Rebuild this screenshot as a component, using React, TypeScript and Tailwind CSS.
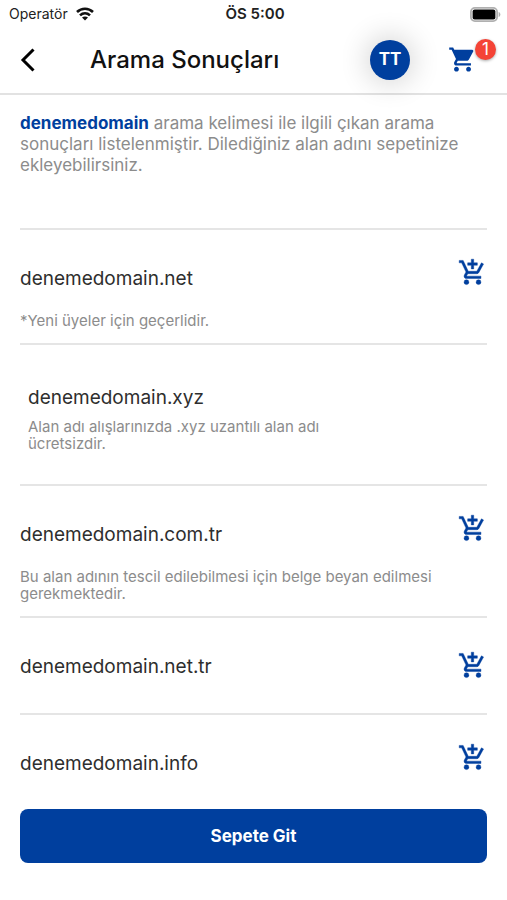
import { MdShoppingCart } from "react-icons/md";

type Domain = {
  name: string;
  note?: string;
  layout: "noted" | "promo" | "plain" | "last";
};

const domains: Domain[] = [
  { name: "denemedomain.net", note: "*Yeni üyeler için geçerlidir.", layout: "noted" },
  {
    name: "denemedomain.xyz",
    note: "Alan adı alışlarınızda .xyz uzantılı alan adı ücretsizdir.",
    layout: "promo",
  },
  {
    name: "denemedomain.com.tr",
    note: "Bu alan adının tescil edilebilmesi için belge beyan edilmesi gerekmektedir.",
    layout: "noted",
  },
  { name: "denemedomain.net.tr", layout: "plain" },
  { name: "denemedomain.info", layout: "last" },
];

function WifiIcon() {
  return (
    <svg viewBox="0 0 18 14" className="h-[14px] w-[18px]" aria-hidden="true">
      <g fill="none" stroke="#111" strokeWidth="2.6">
        <path d="M1 5C5.6.6 12.4.6 17 5" />
        <path d="M4 8.400c2.900-2.700 7.100-2.700 10 0" />
      </g>
      <path d="M6 10.600c1.800-1.500 4.200-1.500 6 0L9 13.600z" fill="#111" />
    </svg>
  );
}

function BatteryIcon() {
  return (
    <svg viewBox="0 0 31 15" className="h-[15px] w-[31px]" aria-hidden="true">
      <rect x="0.9" y="0.9" width="26.2" height="13.2" rx="4" fill="#fff" stroke="#b0b0b0" strokeWidth="1.8" />
      <rect x="2.6" y="2.6" width="22.8" height="9.8" rx="2" fill="#000" />
      <path d="M28.6 5v5c1-.3 1.8-1.300 1.800-2.500S29.600 5.300 28.600 5z" fill="#b0b0b0" />
    </svg>
  );
}

function AddCartIcon() {
  return (
    <svg
      viewBox="0 0 24 24"
      className="size-[29px]"
      fill="currentColor"
      stroke="currentColor"
      strokeWidth="0.35"
      strokeLinejoin="round"
      aria-hidden="true"
    >
      <path d="M11 9h2V6h3V4h-3V1h-2v3H8v2h3z" />
      <circle cx="7" cy="20" r="2" />
      <circle cx="17" cy="20" r="2" />
      <path d="M7.170 14.750l.030-.120.900-1.630h7.450c.750 0 1.410-.410 1.750-1.030l3.860-7.010L19.420 4h-.010l-1.100 2-2.760 5H8.530l-.130-.270L6.160 6l-.950-2-.940-2H1v2h2l3.600 7.590-1.350 2.450c-.160.280-.250.610-.250.960 0 1.100.900 2 2 2h12v-2H7.420c-.130 0-.250-.110-.250-.250z" />
    </svg>
  );
}

function StatusBar() {
  return (
    <div className="grid h-7 grid-cols-3 items-center pr-[6px] pl-[9px] text-[14px] leading-[18px] text-[#222]">
      <div className="flex items-center gap-2">
        <span>Operatör</span>
        <WifiIcon />
      </div>
      <div className="text-center text-[15px] font-semibold">ÖS 5:00</div>
      <div className="flex justify-end">
        <BatteryIcon />
      </div>
    </div>
  );
}

function Header() {
  return (
    <header className="flex h-[67px] items-center border-b-2 border-[#e2e2e2] pr-[30px] pb-[2px] pl-5">
      <button type="button" aria-label="Geri" className="flex w-[70px] text-black">
        <svg viewBox="0 0 16 24" className="h-6 w-4" fill="none" stroke="currentColor" strokeWidth="3" aria-hidden="true">
          <path d="M13.500 1.500 3 12l10.500 10.500" />
        </svg>
      </button>
      <h1 className="flex-1 text-[24px] leading-[30px] font-medium whitespace-nowrap text-[#111]">Arama Sonuçları</h1>
      <button
        type="button"
        aria-label="Hesap TT"
        className="flex size-10 items-center justify-center rounded-full bg-[#003f9e] text-[17px] font-bold text-white shadow-[0_0_28px_4px_rgba(0,0,0,0.16)]"
      >
        TT
      </button>
      <button type="button" aria-label="Sepet, 1 ürün" className="relative ml-[38px] text-[#003f9e]">
        <MdShoppingCart size={29} />
        <span className="absolute -top-[6px] -right-[19px] flex size-[21px] items-center justify-center rounded-full bg-[#f44336] text-[17px] leading-none text-white shadow-[0_1px_3px_rgba(0,0,0,0.35)]">
          1
        </span>
      </button>
    </header>
  );
}

function AddButton({ name }: { name: string }) {
  return (
    <button type="button" aria-label={`${name} sepete ekle`} className="text-[#003f9e]">
      <AddCartIcon />
    </button>
  );
}

function DomainRow({ name, note, layout }: Domain) {
  const title = <h2 className="text-[19px] leading-[26px] text-[#2e2e2e]">{name}</h2>;
  const noteText = <p className="text-[15px] leading-[17px] text-[#8c8c8c]">{note}</p>;

  if (layout === "promo") {
    return (
      <li className="border-t-2 border-[#e5e5e5] px-2 pt-10 pb-8">
        {title}
        <div className="mt-[7px] max-w-[300px]">{noteText}</div>
      </li>
    );
  }

  if (layout === "noted") {
    return (
      <li className="border-t-2 border-[#e5e5e5] pb-[14px]">
        <div className="flex items-start justify-between pt-7">
          <div className="pt-2">{title}</div>
          <AddButton name={name} />
        </div>
        <div className="mt-5 max-w-[420px]">{noteText}</div>
      </li>
    );
  }

  return (
    <li
      className={`flex items-center justify-between border-t-2 border-[#e5e5e5] ${layout === "last" ? "h-[86px]" : "h-[97px]"}`}
    >
      <div className="self-start pt-9">{title}</div>
      <AddButton name={name} />
    </li>
  );
}

export default function App() {
  return (
    <div className="min-h-screen bg-white font-['Inter','Noto_Sans',sans-serif]">
      <StatusBar />
      <Header />
      <main className="px-5 pt-[18px] pb-9">
        <p className="pb-[52px] text-[17px] leading-[21px] text-[#8c8c8c]">
          <strong className="font-bold text-[#003f9e]">denemedomain</strong> arama kelimesi ile ilgili çıkan arama
          sonuçları listelenmiştir. Dilediğiniz alan adını sepetinize ekleyebilirsiniz.
        </p>
        <ul>
          {domains.map((domain) => (
            <DomainRow key={domain.name} {...domain} />
          ))}
        </ul>
        <button
          type="button"
          className="mt-[10px] h-[54px] w-full rounded-lg bg-[#003f9e] text-[17px] leading-[22px] font-bold text-white"
        >
          Sepete Git
        </button>
      </main>
    </div>
  );
}
